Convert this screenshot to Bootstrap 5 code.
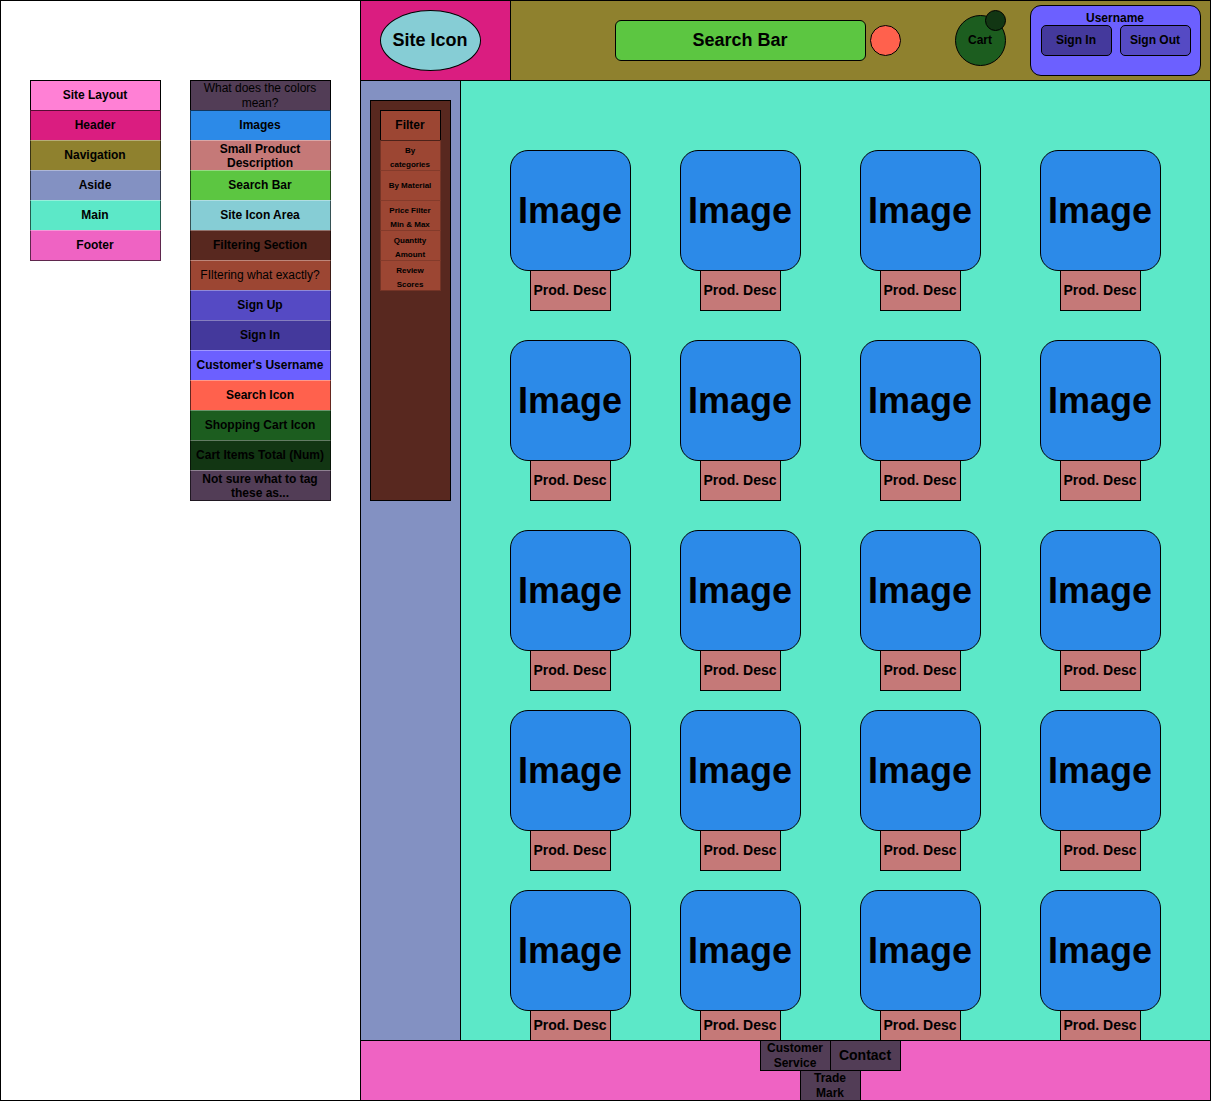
<!DOCTYPE html>
<html lang="en">
<head>
<meta charset="utf-8">
<meta name="viewport" content="width=device-width, initial-scale=1">
<title>Shop wireframe</title>
<link href="https://cdn.jsdelivr.net/npm/bootstrap@5.3.0/dist/css/bootstrap.min.css" rel="stylesheet">
<style>
body{margin:0;background:#fff;color:#000;font-family:"Liberation Sans",Arial,sans-serif;font-size:12px;line-height:14px;font-weight:700}
.box{border:1px solid #000;flex:none}
.mid{display:flex;align-items:center;justify-content:center;text-align:center;padding:0 1px 2px 0}
.page{width:1211px;height:1101px}
.legend-pane{width:361px;height:1101px;padding:79px 0 0 29px;gap:29px}
.site{width:851px;margin-left:-1px}
/* colour key */
.c-layout{background:#ff80d5}.c-header{background:#da1d80}.c-nav{background:#8f812e}.c-aside{background:#8391c2}
.c-main{background:#5ce8c8}.c-footer{background:#ef63c3}.c-misc{background:#523d56}.c-image{background:#2c8ae8}
.c-desc{background:#c57978}.c-search{background:#5cc641}.c-logo{background:#86cdd5}.c-filter{background:#58281f}
.c-option{background:#9c4633}.c-signup{background:#554ac4}.c-signin{background:#44399c}.c-user{background:#6c60ff}
.c-find{background:#ff614d}.c-cart{background:#1c5d1f}.c-count{background:#123613}
.keys{width:131px;flex:none}
.keys.wide{width:141px}
.keys>div{height:30px;border:solid;border-width:1px 1px 0;border-color:rgba(255,255,255,.35) rgba(0,0,0,.6) rgba(0,0,0,.6)}
.keys>div:first-child{border-color:#000}
.keys>div:nth-child(2){border-top-color:rgba(0,0,0,.6)}
.keys>div:last-child{height:31px;border-bottom-width:1px}
.soft{font-weight:400}
.keys>.tall{line-height:15px;padding-bottom:0}
.keys>.pair{padding:1px 1px 0 0}
.head-row{height:81px}
.logo-area{width:151px;padding:0 0 0 19px}
.logo-oval{width:101px;height:61px;border-radius:50%;font-size:18px}
.nav-area{width:701px;margin-left:-1px;padding-left:104px}
.search{width:251px;height:41px;border-radius:6px;font-size:18px}
.find{width:31px;height:31px;border-radius:50%;margin-left:4px}
.cart{width:51px;height:51px;border-radius:50%;margin-left:54px;position:relative}
.count{width:21px;height:21px;border-radius:50%;position:absolute;top:-6px;right:-1px}
.user{width:171px;height:71px;border-radius:11px;margin-left:24px;padding-top:5px}
.user-name{padding-right:1px}
.user-row{padding-left:10px;gap:8px}
.sign{width:71px;height:31px;border-radius:5px}
.mid-row{height:961px;margin-top:-1px}
.side{width:101px;padding:19px 0 0 9px}
.filter{width:81px;height:401px;padding:9px 0 0 9px}
.opts{width:61px}
.opts>div{height:30px;border:1px solid rgba(0,0,0,.25);border-top-color:rgba(0,0,0,.15);border-bottom:0}
.opts>div:first-child{border-color:#000}
.opts>div:nth-child(2){border-top-color:rgba(0,0,0,.5)}
.opts>div:last-child{height:31px;border-bottom:1px solid rgba(0,0,0,.25)}
.opts p{margin:0;padding:3px 1px 0 0;font-size:8px;line-height:14px;text-align:center}
.opts p.single{padding-top:8px}
.products{width:751px;margin-left:-1px;padding:69px 0 0 49px;display:grid;grid-template-columns:170px 180px 180px 121px;grid-template-rows:190px 190px 180px 180px 150px;justify-content:start}
.pic{width:121px;height:121px;border-radius:18px;font-size:36px;line-height:42px;position:relative;padding-bottom:0}
.desc{width:81px;height:41px;margin:-1px 0 0 20px;font-size:14px;line-height:16px;white-space:nowrap}
.product:nth-child(n+17) .desc{height:31px}
.foot{height:61px;margin-top:-1px;padding-left:399px}
.foot-links{margin-top:-1px}
.link-box{width:71px;height:31px;line-height:15px;padding-bottom:0}
.link-box+.link-box{margin-left:-1px;font-size:14px}
.trade{width:61px;height:31px;line-height:15px;margin:-1px 0 0 40px;padding-bottom:0}
</style>
</head>
<body>
<div class="page d-flex">
  <section class="legend-pane box d-flex align-items-start">
    <div class="keys">
      <div class="mid c-layout">Site Layout</div>
      <div class="mid c-header">Header</div>
      <div class="mid c-nav">Navigation</div>
      <div class="mid c-aside">Aside</div>
      <div class="mid c-main">Main</div>
      <div class="mid c-footer">Footer</div>
    </div>
    <div class="keys wide">
      <div class="mid c-misc soft tall">What does the colors<br>mean?</div>
      <div class="mid c-image">Images</div>
      <div class="mid c-desc pair">Small Product<br>Description</div>
      <div class="mid c-search">Search Bar</div>
      <div class="mid c-logo">Site Icon Area</div>
      <div class="mid c-filter">Filtering Section</div>
      <div class="mid c-option soft">FIltering what exactly?</div>
      <div class="mid c-signup">Sign Up</div>
      <div class="mid c-signin">Sign In</div>
      <div class="mid c-user">Customer's Username</div>
      <div class="mid c-find">Search Icon</div>
      <div class="mid c-cart">Shopping Cart Icon</div>
      <div class="mid c-count">Cart Items Total (Num)</div>
      <div class="mid c-misc pair">Not sure what to tag<br>these as...</div>
    </div>
  </section>
  <div class="site d-flex flex-column">
    <div class="head-row d-flex">
      <header class="logo-area box d-flex align-items-center c-header"><div class="logo-oval box mid c-logo">Site Icon</div></header>
      <nav class="nav-area box d-flex align-items-center c-nav">
        <div class="search box mid c-search">Search Bar</div>
        <div class="find box c-find"></div>
        <div class="cart box mid c-cart">Cart<div class="count box c-count"></div></div>
        <div class="user box c-user">
          <div class="user-name text-center">Username</div>
          <div class="user-row d-flex">
            <div class="sign box mid c-signin">Sign In</div>
            <div class="sign box mid c-signup">Sign Out</div>
          </div>
        </div>
      </nav>
    </div>
    <div class="mid-row d-flex">
      <aside class="side box c-aside">
        <div class="filter box c-filter">
          <div class="opts">
            <div class="mid c-option">Filter</div>
            <div class="c-option"><p>By<br>categories</p></div>
            <div class="c-option"><p class="single">By Material</p></div>
            <div class="c-option"><p>Price Filter<br>Min &amp; Max</p></div>
            <div class="c-option"><p>Quantity<br>Amount</p></div>
            <div class="c-option"><p>Review<br>Scores</p></div>
          </div>
        </div>
      </aside>
      <main class="products box c-main">
        <div class="product"><div class="pic box mid c-image">Image</div><div class="desc box mid c-desc">Prod. Desc</div></div>
        <div class="product"><div class="pic box mid c-image">Image</div><div class="desc box mid c-desc">Prod. Desc</div></div>
        <div class="product"><div class="pic box mid c-image">Image</div><div class="desc box mid c-desc">Prod. Desc</div></div>
        <div class="product"><div class="pic box mid c-image">Image</div><div class="desc box mid c-desc">Prod. Desc</div></div>
        <div class="product"><div class="pic box mid c-image">Image</div><div class="desc box mid c-desc">Prod. Desc</div></div>
        <div class="product"><div class="pic box mid c-image">Image</div><div class="desc box mid c-desc">Prod. Desc</div></div>
        <div class="product"><div class="pic box mid c-image">Image</div><div class="desc box mid c-desc">Prod. Desc</div></div>
        <div class="product"><div class="pic box mid c-image">Image</div><div class="desc box mid c-desc">Prod. Desc</div></div>
        <div class="product"><div class="pic box mid c-image">Image</div><div class="desc box mid c-desc">Prod. Desc</div></div>
        <div class="product"><div class="pic box mid c-image">Image</div><div class="desc box mid c-desc">Prod. Desc</div></div>
        <div class="product"><div class="pic box mid c-image">Image</div><div class="desc box mid c-desc">Prod. Desc</div></div>
        <div class="product"><div class="pic box mid c-image">Image</div><div class="desc box mid c-desc">Prod. Desc</div></div>
        <div class="product"><div class="pic box mid c-image">Image</div><div class="desc box mid c-desc">Prod. Desc</div></div>
        <div class="product"><div class="pic box mid c-image">Image</div><div class="desc box mid c-desc">Prod. Desc</div></div>
        <div class="product"><div class="pic box mid c-image">Image</div><div class="desc box mid c-desc">Prod. Desc</div></div>
        <div class="product"><div class="pic box mid c-image">Image</div><div class="desc box mid c-desc">Prod. Desc</div></div>
        <div class="product"><div class="pic box mid c-image">Image</div><div class="desc box mid c-desc">Prod. Desc</div></div>
        <div class="product"><div class="pic box mid c-image">Image</div><div class="desc box mid c-desc">Prod. Desc</div></div>
        <div class="product"><div class="pic box mid c-image">Image</div><div class="desc box mid c-desc">Prod. Desc</div></div>
        <div class="product"><div class="pic box mid c-image">Image</div><div class="desc box mid c-desc">Prod. Desc</div></div>
      </main>
    </div>
    <footer class="foot box c-footer">
      <div class="foot-links d-flex">
        <div class="link-box box mid c-misc">Customer<br>Service</div>
        <div class="link-box box mid c-misc">Contact</div>
      </div>
      <div class="trade box mid c-misc">Trade<br>Mark</div>
    </footer>
  </div>
</div>
<script src="https://cdn.jsdelivr.net/npm/bootstrap@5.3.0/dist/js/bootstrap.bundle.min.js"></script>
</body>
</html>
